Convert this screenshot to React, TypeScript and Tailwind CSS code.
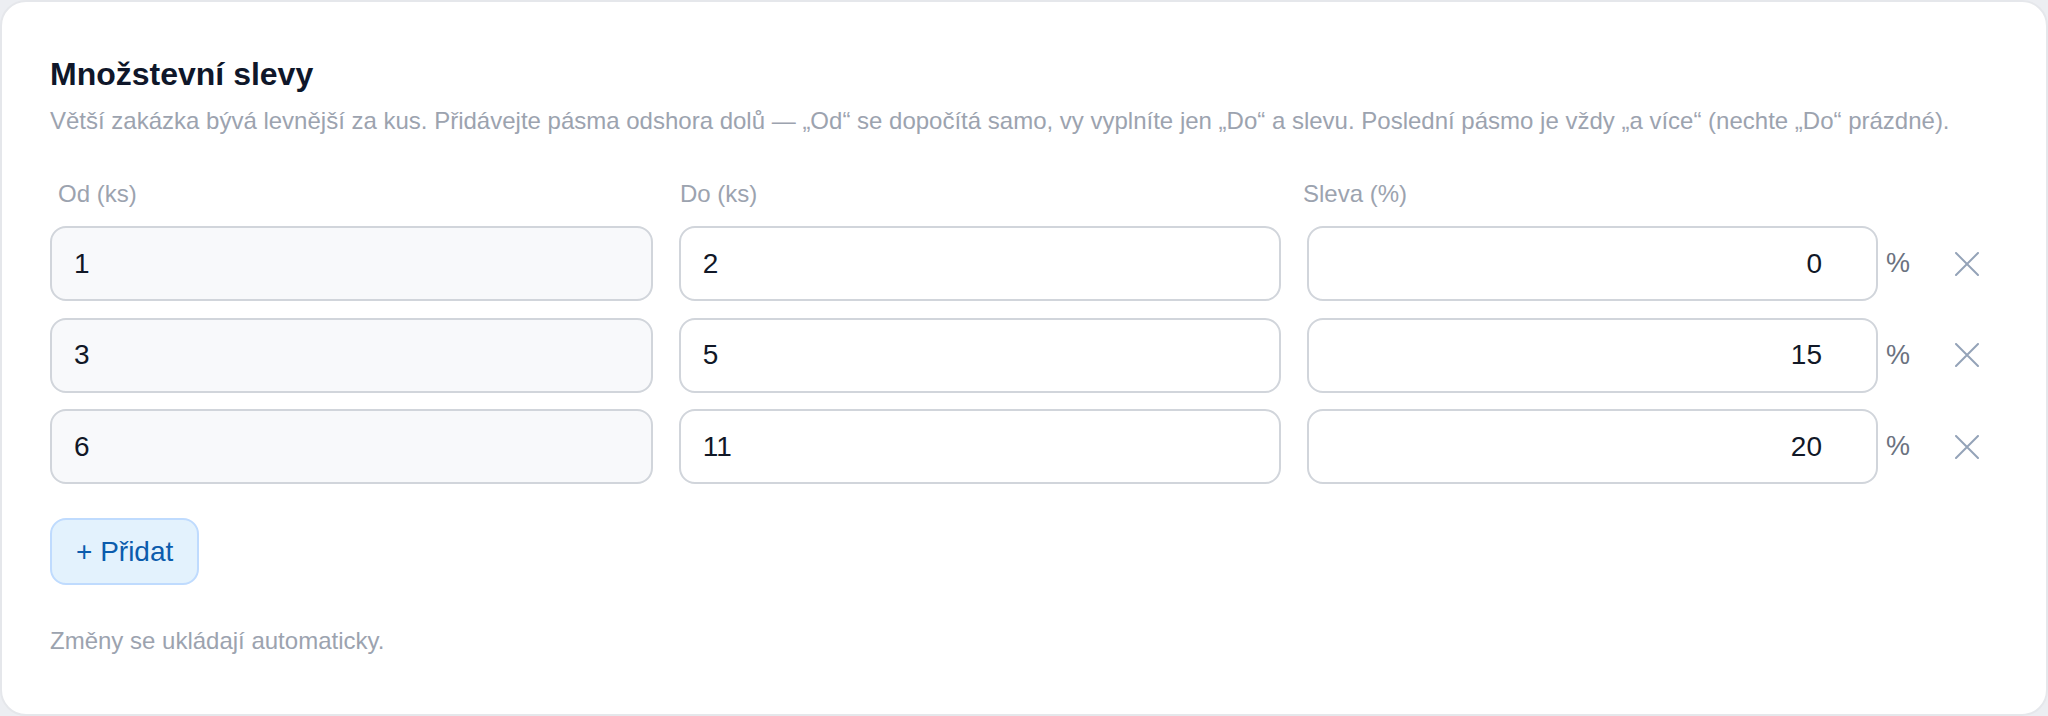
import { useState } from 'react';

type Tier = { from: number; to: string; discount: string };

const initialTiers: Tier[] = [
  { from: 1, to: '2', discount: '0' },
  { from: 3, to: '5', discount: '15' },
  { from: 6, to: '11', discount: '20' },
];

function XIcon() {
  return (
    <svg width="24" height="24" viewBox="0 0 24 24" fill="none" stroke="currentColor" strokeWidth="2" strokeLinecap="round">
      <path d="M1 1 23 23M23 1 1 23" />
    </svg>
  );
}

export default function App() {
  const [tiers] = useState<Tier[]>(initialTiers);

  return (
    <div className="h-[716px] w-full bg-[#eceef2] font-['Liberation_Sans',Arial,sans-serif]">
      <div className="box-border flex h-[716px] w-full flex-col rounded-[26px] border-2 border-[#e5e7eb] bg-white px-[48px] pt-[52px]">
        <h2 className="text-[32px] font-bold leading-[40px] text-[#0f172a]">Množstevní slevy</h2>
        <p className="mt-[11px] whitespace-nowrap text-[24px] leading-[32px] text-[#9ca3af]">
          Větší zakázka bývá levnější za kus. Přidávejte pásma odshora dolů — „Od“ se dopočítá samo, vy vyplníte jen „Do“ a slevu. Poslední pásmo je vždy „a více“ (nechte „Do“ prázdné).
        </p>

        <div className="mt-[41px] grid grid-cols-[622px_623px_1fr] pl-[8px] text-[24px] leading-[32px] text-[#9ca3af]">
          <span>Od (ks)</span>
          <span>Do (ks)</span>
          <span>Sleva (%)</span>
        </div>

        <div className="mt-[16px] flex flex-col gap-[16.5px]">
          {tiers.map((t, i) => (
            <div
              key={i}
              className="grid h-[75px] grid-cols-[minmax(0,1fr)_minmax(0,1fr)_minmax(0,1fr)_62px] items-center gap-[26px]"
            >
              <input
                readOnly
                value={t.from}
                className="h-full w-full min-w-0 rounded-[16px] border-2 border-[#d1d5db] bg-[#f8f9fb] pl-[22px] text-[28px] text-[#111827] outline-none"
              />
              <input
                readOnly
                value={t.to}
                className="h-full w-full min-w-0 rounded-[16px] border-2 border-[#d1d5db] bg-white pl-[22px] text-[28px] text-[#111827] outline-none"
              />
              <div className="flex h-full min-w-0 items-center gap-[8px]">
                <input
                  readOnly
                  value={t.discount}
                  className="h-full min-w-0 flex-1 rounded-[16px] border-2 border-[#d1d5db] bg-white pr-[54px] text-right text-[28px] text-[#111827] outline-none"
                />
                <span className="text-[27px] text-[#6b7280]">%</span>
              </div>
              <button className="flex h-full w-[62px] items-center justify-center text-[#94a3b8]">
                <XIcon />
              </button>
            </div>
          ))}
        </div>

        <div className="mt-[34px]">
          <button className="flex h-[67px] items-center rounded-[16px] border-2 border-[#bfdbfe] bg-[#e3f2fd] px-[24px] text-[28px] text-[#0b5cad]">
            + Přidat
          </button>
        </div>

        <p className="mt-[40px] text-[24px] leading-[32px] text-[#9ca3af]">Změny se ukládají automaticky.</p>
      </div>
    </div>
  );
}
